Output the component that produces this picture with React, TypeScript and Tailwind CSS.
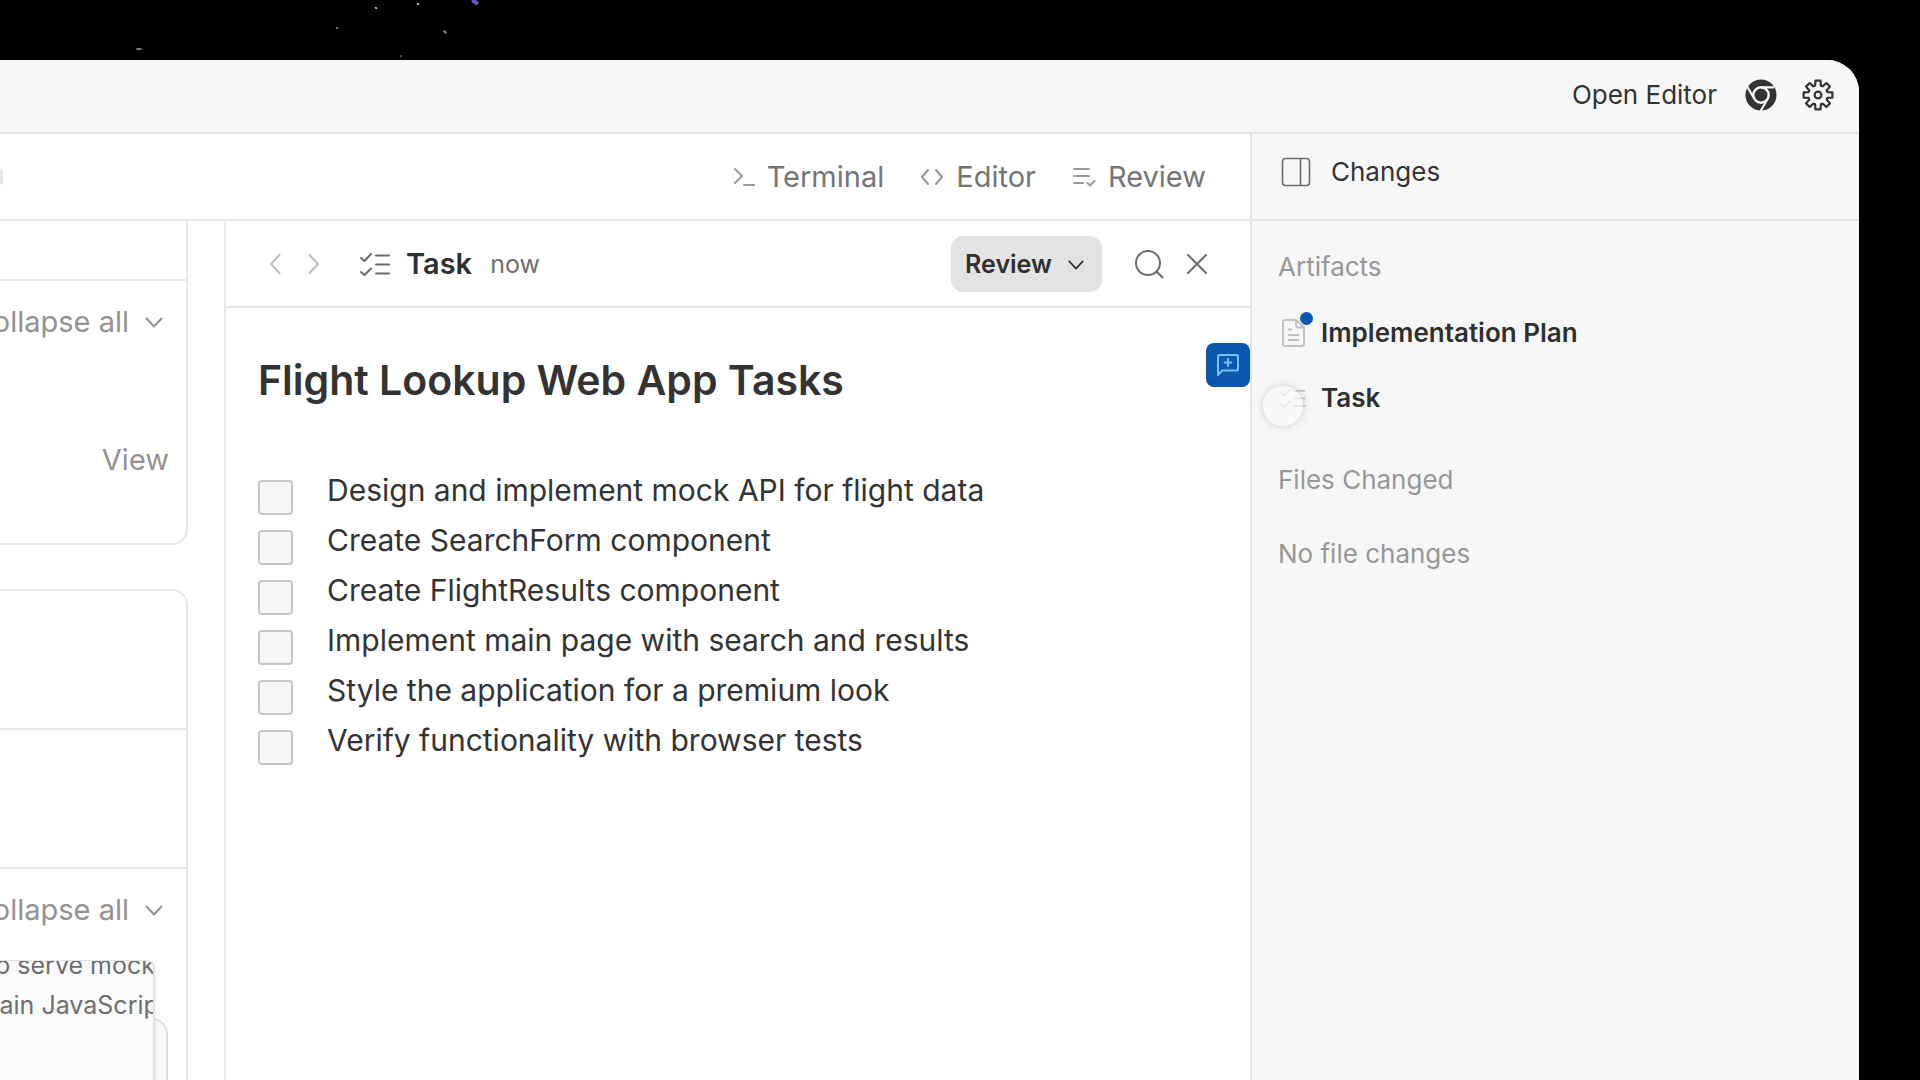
import { useState } from "react";
import type { ReactNode } from "react";

const TASKS = [
  "Design and implement mock API for flight data",
  "Create SearchForm component",
  "Create FlightResults component",
  "Implement main page with search and results",
  "Style the application for a premium look",
  "Verify functionality with browser tests",
];

const STARS = [
  { x: 376, y: 8, w: 3, h: 2, r: 35, c: "#b8b4b0" },
  { x: 418, y: 4, w: 3, h: 2, r: 35, c: "#b8b4b0" },
  { x: 337, y: 28, w: 2, h: 2, r: 0, c: "#9a9a9a" },
  { x: 445, y: 32, w: 4, h: 2, r: 35, c: "#8a8884" },
  { x: 139, y: 49, w: 6, h: 2, r: 0, c: "#77757a" },
  { x: 401, y: 56, w: 2, h: 2, r: 35, c: "#77757a" },
  { x: 475, y: 2, w: 7, h: 4, r: 35, c: "#6a4fc8" },
];

type IconProps = { className?: string; children?: ReactNode; box?: string; width?: number };

function Icon({ className, children, box = "0 0 24 24", width = 2 }: IconProps) {
  return (
    <svg
      viewBox={box}
      className={className}
      fill="none"
      stroke="currentColor"
      strokeWidth={width}
      strokeLinecap="round"
      strokeLinejoin="round"
      aria-hidden="true"
    >
      {children}
    </svg>
  );
}

function ChevronDown({ className }: { className?: string }) {
  return (
    <Icon box="0 0 18 11" className={className}>
      <path d="M1.500 1.500l7.500 8 7.500-8" />
    </Icon>
  );
}

function ChecklistIcon({ className }: { className?: string }) {
  return (
    <Icon box="0 0 30 24" className={className} width={2}>
      <path d="M1 6l3.500 3L11 2M1 20l3.500 3L11 16.500" />
      <path d="M16 3.500h13M16 12.500h13M16 21.500h13" />
    </Icon>
  );
}

function ChromeIcon() {
  return (
    <svg viewBox="0 0 32 32" className="size-8" aria-hidden="true">
      <circle cx="16" cy="16" r="15.500" fill="#333" />
      <circle cx="16" cy="16" r="7.700" fill="none" stroke="#f7f7f7" strokeWidth="2.400" />
      <path d="M16 8.300H29M9.300 19.800L2 7.200M22.700 19.800L15.600 32" stroke="#f7f7f7" strokeWidth="2.200" />
    </svg>
  );
}

function GearIcon() {
  const teeth = [];
  for (let i = 0; i < 8; i++) {
    const at = (deg: number, r: number) => {
      const a = ((i * 45 + deg - 90) * Math.PI) / 180;
      return `${(16 + r * Math.cos(a)).toFixed(2)} ${(16 + r * Math.sin(a)).toFixed(2)}`;
    };
    teeth.push(`${i ? "L" : "M"}${at(-17, 9.8)}L${at(-10, 14.6)}L${at(10, 14.6)}L${at(17, 9.8)}`);
  }
  return (
    <Icon box="0 0 32 32" className="size-8" width={2.2}>
      <path d={teeth.join("") + "Z"} />
      <circle cx="16" cy="16" r="3.400" />
    </Icon>
  );
}

function CollapseAll() {
  return (
    <button className="flex shrink-0 items-center gap-4 text-[29px] leading-9 text-[#929292]">
      Collapse all
      <ChevronDown className="h-[11px] w-[18px]" />
    </button>
  );
}

function Conversation() {
  return (
    <aside className="flex w-56 shrink-0 flex-col overflow-hidden pr-9">
      <section className="flex h-[324px] shrink-0 flex-col rounded-br-2xl border-r-2 border-b-2 border-[#e7e7e7]">
        <div className="h-15 shrink-0 border-b-2 border-[#e7e7e7]" />
        <div className="flex justify-end pt-[23px] pr-[23px]">
          <CollapseAll />
        </div>
        <div className="mt-[102px] flex justify-end pr-[17px]">
          <button className="text-[29px] leading-9 text-[#929292]">View</button>
        </div>
      </section>
      <section className="mt-11 flex flex-1 flex-col rounded-tr-2xl border-t-2 border-r-2 border-[#e7e7e7]">
        <div className="h-[139px] shrink-0 border-b-2 border-[#e7e7e7]" />
        <div className="h-[139px] shrink-0 border-b-2 border-[#e7e7e7]" />
        <div className="flex justify-end pt-[23px] pr-[23px]">
          <CollapseAll />
        </div>
        <div className="relative mt-8 flex-1 pr-[31px]">
          <div className="absolute top-[58px] right-[18px] bottom-0 w-16 rounded-tr-2xl border-t-2 border-r-2 border-[#dedede] bg-[#f9f9f9]" />
          <div className="relative flex h-full flex-col items-end overflow-hidden rounded-tr-lg border-t border-r-2 border-[#e2e2e2] bg-[#fafafa] text-[25px] leading-10 whitespace-nowrap text-[#6e6e6e] shadow-md">
            <p className="-mt-4 -mr-0.5">API route to serve mock</p>
            <p className="-mr-3.5">in plain JavaScript</p>
          </div>
        </div>
      </section>
    </aside>
  );
}

function TaskPane() {
  const [done, setDone] = useState<boolean[]>(TASKS.map(() => false));

  return (
    <main className="relative flex min-w-0 flex-1 flex-col border-l-2 border-[#e7e7e7]">
      <div className="flex h-[87px] shrink-0 items-center border-b-2 border-[#e7e7e7] pr-[42px] pl-[43px]">
        <button aria-label="Back" className="text-[#bdbdbd]">
          <Icon box="0 0 12 20" className="h-5 w-3">
            <path d="M10.500 1L2 10l8.500 9" />
          </Icon>
        </button>
        <button aria-label="Forward" className="ml-[27px] text-[#bdbdbd]">
          <Icon box="0 0 12 20" className="h-5 w-3">
            <path d="M1.500 1L10 10l-8.500 9" />
          </Icon>
        </button>
        <ChecklistIcon className="ml-10 h-6 w-[30px] text-[#6b6b6b]" />
        <h2 className="ml-4 text-[29px] leading-9 font-semibold text-[#2f2f2f]">Task</h2>
        <span className="ml-[18px] text-[25px] leading-9 text-[#6e6e6e]">now</span>
        <button className="ml-auto flex h-14 items-center gap-4 rounded-xl bg-[#e3e3e3] pt-0.5 pr-[18px] pl-[14px] text-[25px] font-semibold text-[#2f2f2f]">
          Review
          <ChevronDown className="h-[10px] w-4" />
        </button>
        <button aria-label="Search" className="ml-8 text-[#6b6b6b]">
          <Icon box="0 0 30 30" className="size-[30px]">
            <circle cx="14" cy="14" r="12" />
            <path d="M22.500 22.500L28.500 28.500" />
          </Icon>
        </button>
        <button aria-label="Close" className="ml-[22px] text-[#6b6b6b]">
          <Icon box="0 0 22 22" className="size-[22px]">
            <path d="M2 2l18 18M20 2L2 20" />
          </Icon>
        </button>
      </div>
      <button
        aria-label="Add comment"
        className="absolute top-[122px] right-0 flex size-11 items-center justify-center rounded-lg bg-[#0b57ad] text-[#7dbcff]"
      >
        <Icon box="0 0 24 24" className="size-6">
          <path d="M3.500 2h17A1.500 1.500 0 0 1 22 3.500v12.500a1.500 1.500 0 0 1-1.500 1.500H6L2 22V3.500A1.500 1.500 0 0 1 3.500 2z" />
          <path d="M12 6v7M8.500 9.500h7" />
        </Icon>
      </button>
      <article className="px-8 pt-12 text-[#333]">
        <h1 className="text-[41px] leading-[48px] font-semibold">Flight Lookup Web App Tasks</h1>
        <ul className="mt-17">
          {TASKS.map((task, i) => (
            <li key={task}>
              <label className="flex h-[50px] gap-[34px] text-[30px] leading-9">
                <input
                  type="checkbox"
                  checked={done[i]}
                  onChange={() => setDone((d) => d.map((v, j) => (j === i ? !v : v)))}
                  className="mt-2 size-[35px] shrink-0 appearance-none rounded-[4px] border-2 border-[#c6c6c6] bg-[#f7f7f7] checked:bg-[#0b57ad]"
                />
                {task}
              </label>
            </li>
          ))}
        </ul>
      </article>
    </main>
  );
}

function Sidebar() {
  return (
    <aside className="w-[609px] shrink-0 border-l-2 border-[#e4e4e4] bg-[#f7f7f7]">
      <div className="flex h-[87px] items-center gap-5 border-b-2 border-[#e4e4e4] pb-[10px] pl-[29px]">
        <Icon box="0 0 30 30" className="size-[30px] text-[#6b6b6b]" width={1.6}>
          <rect x="1.500" y="1.500" width="27" height="27" rx="3" />
          <path d="M19.500 2v26" />
        </Icon>
        <h2 className="text-[26px] leading-9 text-[#333]">Changes</h2>
      </div>
      <div className="pt-7 pl-[26px] text-[26px] leading-9">
        <h3 className="text-[#979797]">Artifacts</h3>
        <a href="#plan" className="mt-[30px] flex items-center text-[#2f2f2f]">
          <span className="relative">
            <Icon box="0 0 30 30" className="size-[30px] text-[#c2c2c2]">
              <path d="M7 2h11l8 7.500V26a2 2 0 0 1-2 2H7a2 2 0 0 1-2-2V4a2 2 0 0 1 2-2z" />
              <path d="M18 2v5.500a2 2 0 0 0 2 2h6M10.500 11.500h3M10.500 17h10M10.500 22h10" />
            </Icon>
            <span className="absolute -top-1.5 right-[-5px] size-[13px] rounded-full bg-[#0b57ad]" />
          </span>
          <span className="ml-[13px] font-semibold">Implementation Plan</span>
        </a>
        <a href="#task" className="mt-[29px] flex items-center text-[#2f2f2f]">
          <span className="relative flex w-[30px] justify-center">
            <ChecklistIcon className="h-5 w-[26px] text-[#c8c8c8]" />
            <span className="absolute -top-0.5 left-[-15px] size-10 rounded-full bg-[#fafafa]/60 shadow-[0_0_8px_rgba(0,0,0,0.18)]" />
          </span>
          <span className="ml-[13px] font-semibold">Task</span>
        </a>
        <h3 className="mt-[46px] text-[#979797]">Files Changed</h3>
        <p className="mt-[38px] text-[#979797]">No file changes</p>
      </div>
    </aside>
  );
}

export default function App() {
  return (
    <div className="relative flex h-screen flex-col overflow-hidden bg-black pt-15 pr-[61px] font-['Inter','Liberation_Sans',sans-serif]">
      <svg className="absolute top-0 left-0 h-15 w-full" aria-hidden="true">
        {STARS.map((s) => (
          <rect
            key={s.x}
            x={s.x - s.w / 2}
            y={s.y - s.h / 2}
            width={s.w}
            height={s.h}
            rx="1"
            fill={s.c}
            transform={`rotate(${s.r} ${s.x} ${s.y})`}
          />
        ))}
      </svg>
      <div className="flex min-h-0 flex-1 flex-col overflow-hidden rounded-tr-[32px] bg-white">
        <header className="flex h-[74px] shrink-0 items-center justify-end border-b-2 border-[#e4e4e4] bg-[#f7f7f7] pr-[25px] pb-0.5 text-[#333]">
          <button className="text-[26px] leading-9">Open Editor</button>
          <button aria-label="Open browser" className="ml-7">
            <ChromeIcon />
          </button>
          <button aria-label="Settings" className="ml-[25px]">
            <GearIcon />
          </button>
        </header>
        <div className="flex min-h-0 flex-1">
          <div className="flex min-w-0 flex-1 flex-col">
            <nav className="flex h-[87px] shrink-0 items-center justify-end border-b-2 border-[#e7e7e7] pr-11 text-[29px] leading-9 text-[#757575]">
              <span className="mr-auto h-4 w-[3px] rounded-r-full bg-[#e6e6e6]" />
              <button className="flex items-center gap-3">
                <Icon box="0 0 22 20" className="h-5 w-[22px] text-[#9a9a9a]">
                  <path d="M2 2l7 7-7 7M11 18h10" />
                </Icon>
                Terminal
              </button>
              <button className="ml-9 flex items-center gap-3">
                <Icon box="0 0 24 18" className="h-[18px] w-6 text-[#9a9a9a]">
                  <path d="M8 2L2 9l6 7M16 2l6 7-6 7" />
                </Icon>
                Editor
              </button>
              <button className="ml-9 flex items-center gap-3">
                <Icon box="0 0 24 20" className="h-5 w-6 text-[#9a9a9a]">
                  <path d="M2 2h15M2 9h15M2 16h9M15.500 16l2.500 2.500 4.500-4.500" />
                </Icon>
                Review
              </button>
            </nav>
            <div className="flex min-h-0 flex-1">
              <Conversation />
              <TaskPane />
            </div>
          </div>
          <Sidebar />
        </div>
      </div>
    </div>
  );
}
